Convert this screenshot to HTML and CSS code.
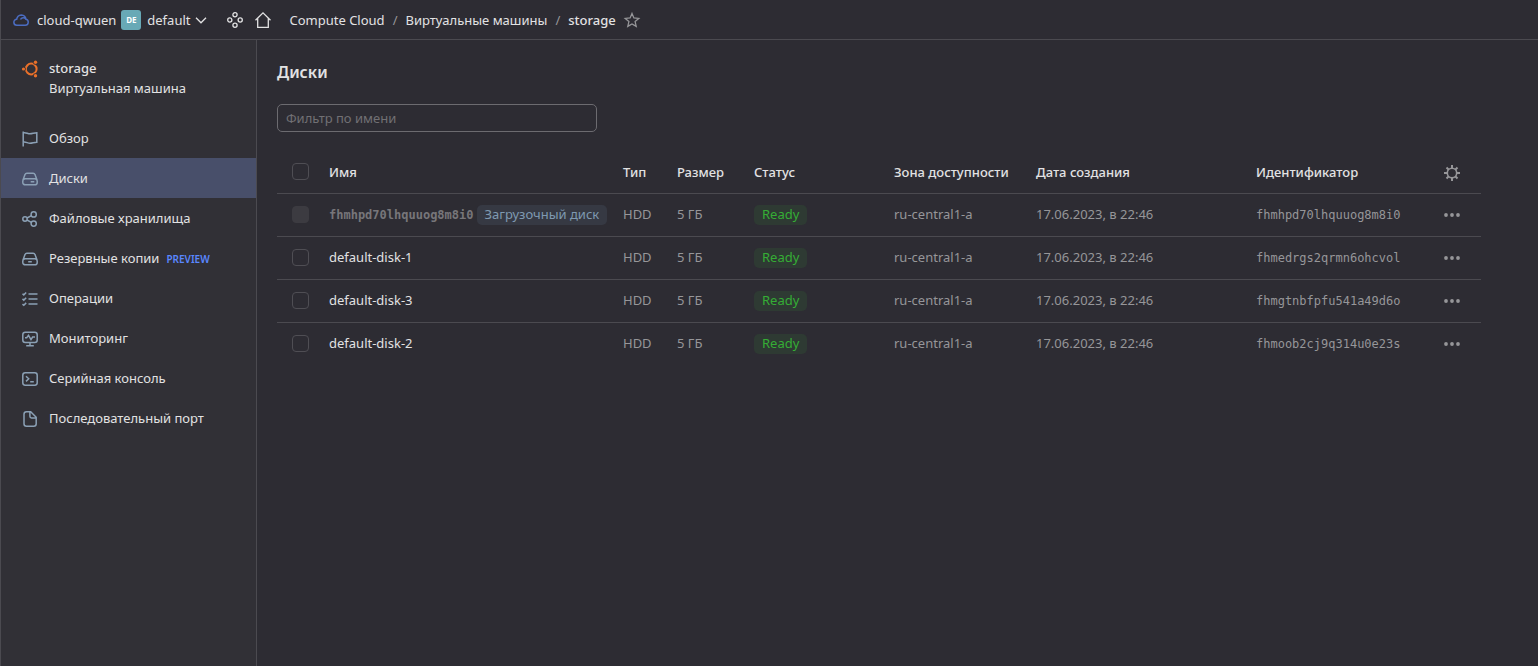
FILE: index.html
```html
<!DOCTYPE html>
<html lang="ru">
<head>
<meta charset="utf-8">
<meta name="viewport" content="width=device-width, initial-scale=1">
<title>storage — Диски</title>
<link rel="stylesheet" href="styles.css">
</head>
<body>
<div class="app">
  <header class="topbar">
    <a class="cloud" href="#">
      <svg class="icon icon-cloud" viewBox="0 0 16 16"><path d="M4 13.2h8.200a3 3 0 0 0 .8-5.900A5 5 0 0 0 8.300 2.900A5 5 0 0 0 3.700 7.200A3 3 0 0 0 4 13.200zM7.500 7.600A3 3 0 0 1 12.800 7"/></svg>
      <span>cloud-qwuen</span>
    </a>
    <button class="folder" type="button">
      <span class="folder-badge">DE</span>
      <span>default</span>
      <svg class="icon icon-chevron" viewBox="0 0 16 16"><path d="M3 5.800 8 10.800l5-5"/></svg>
    </button>
    <button class="tool" type="button" aria-label="Все сервисы">
      <svg class="icon" viewBox="0 0 16 16"><circle cx="8" cy="2.800" r="2.100"/><circle cx="8" cy="13.200" r="2.100"/><circle cx="2.800" cy="8" r="2.100"/><circle cx="13.200" cy="8" r="2.100"/></svg>
    </button>
    <a class="tool tool-home" href="#" aria-label="Главная">
      <svg class="icon" viewBox="0 0 16 16"><path d="M.5 8.300 8 .8l7.500 7.500M2.700 6.500v8.800h10.600V6.500"/></svg>
    </a>
    <nav class="crumbs" aria-label="Навигация">
      <a href="#">Compute Cloud</a>
      <span class="slash">/</span>
      <a href="#">Виртуальные машины</a>
      <span class="slash">/</span>
      <a class="current" href="#">storage</a>
    </nav>
    <button class="tool tool-star" type="button" aria-label="В избранное">
      <svg class="icon" viewBox="0 0 16 16"><path d="m8 1.500 1.900 4.500 4.900.4-3.700 3.200 1.100 4.800L8 11.900l-4.200 2.500 1.100-4.800L1.200 6.400l4.900-.4z"/></svg>
    </button>
  </header>

  <aside class="sidebar">
    <div class="resource">
      <svg class="icon icon-ubuntu" viewBox="0 0 16 16"><circle class="ring" cx="9.200" cy="8" r="5.400"/><circle class="gap" cx="1.600" cy="8" r="2.300"/><circle class="gap" cx="13.300" cy="1.400" r="2.300"/><circle class="gap" cx="13.300" cy="14.600" r="2.300"/><circle class="dot" cx="1.500" cy="8" r="1.600"/><circle class="dot" cx="13.500" cy="1.300" r="1.700"/><circle class="dot" cx="13.500" cy="14.700" r="1.700"/></svg>
      <div>
        <div class="resource-name">storage</div>
        <div>Виртуальная машина</div>
      </div>
    </div>
    <nav class="menu" aria-label="Разделы">
      <a class="menu-item" href="#">
        <svg class="icon" viewBox="0 0 16 16"><path d="M1.200.5v15M1.200 1.800C4 1 5.500 2.800 8 2.800s4-1 6.800-1v9.400C12 11.200 10.500 12.200 8 12.200s-4-1.500-6.800-1"/></svg>
        Обзор
      </a>
      <a class="menu-item active" href="#" aria-current="page">
        <svg class="icon" viewBox="0 0 16 16"><path d="M.8 9.500 3 3.600A2 2 0 0 1 4.900 2.200h6.200A2 2 0 0 1 13 3.600l2.200 5.900M3.200 7.700h9.600a2.400 2.400 0 0 1 2.400 2.400v1.300a2.400 2.400 0 0 1-2.400 2.400H3.200a2.400 2.400 0 0 1-2.400-2.400v-1.300a2.400 2.400 0 0 1 2.400-2.400zM8.700 10.800h3.600"/></svg>
        Диски
      </a>
      <a class="menu-item" href="#">
        <svg class="icon" viewBox="0 0 16 16"><circle cx="3" cy="8" r="2.200"/><circle cx="11.700" cy="3.400" r="2.600"/><circle cx="11.700" cy="12.600" r="2.600"/><path d="m5 7 4.400-2.300M5 9l4.400 2.300"/></svg>
        Файловые хранилища
      </a>
      <a class="menu-item" href="#">
        <svg class="icon" viewBox="0 0 16 16"><path d="M.8 9.500 3 3.600A2 2 0 0 1 4.900 2.200h6.200A2 2 0 0 1 13 3.600l2.200 5.900M3.200 7.700h9.600a2.400 2.400 0 0 1 2.400 2.400v1.300a2.400 2.400 0 0 1-2.400 2.400H3.200a2.400 2.400 0 0 1-2.400-2.400v-1.300a2.400 2.400 0 0 1 2.400-2.400zM6.200 10.800h3.600"/></svg>
        Резервные копии
        <span class="preview">PREVIEW</span>
      </a>
      <a class="menu-item" href="#">
        <svg class="icon" viewBox="0 0 16 16"><path d="M6.500 3h9M6.500 8h9M6.500 13h9M.5 2.700l1.300 1.200L4.200 1.500M.5 7.900l1.300 1.200 2.400-2.400M.5 13.100l1.300 1.200 2.400-2.400"/></svg>
        Операции
      </a>
      <a class="menu-item" href="#">
        <svg class="icon" viewBox="0 0 16 16"><rect x=".8" y="1.200" width="14.400" height="10.200" rx="2.500"/><path d="M8 11.500V14.500M4.200 14.700h7.600M3 6.700h1.700l1.800-2.300 2.500 4.200 1.600-2.500H13"/></svg>
        Мониторинг
      </a>
      <a class="menu-item" href="#">
        <svg class="icon" viewBox="0 0 16 16"><rect x=".8" y="1.800" width="14.400" height="12.400" rx="2.400"/><path d="m4 5.200 2.700 2.600L4 10.400M8.200 10.800h3.600"/></svg>
        Серийная консоль
      </a>
      <a class="menu-item" href="#">
        <svg class="icon" viewBox="0 0 16 16"><path d="M4.500.8h4.200l5.500 5.500v6.400a2.500 2.500 0 0 1-2.500 2.500H4.500A2.500 2.500 0 0 1 2 12.700V3.300A2.500 2.500 0 0 1 4.500.8zM7.900 1v4.300a1.600 1.600 0 0 0 1.600 1.600H14"/></svg>
        Последовательный порт
      </a>
    </nav>
  </aside>

  <main class="content">
    <h1 class="title">Диски</h1>
    <input class="filter" type="text" placeholder="Фильтр по имени" aria-label="Фильтр по имени">
    <table class="disks">
      <colgroup>
        <col class="col-check"><col class="col-name"><col class="col-type"><col class="col-size"><col class="col-status"><col class="col-zone"><col class="col-date"><col class="col-id"><col class="col-actions">
      </colgroup>
      <thead>
        <tr>
          <th class="check"><input type="checkbox" aria-label="Выбрать все"></th>
          <th>Имя</th><th>Тип</th><th>Размер</th><th>Статус</th><th>Зона доступности</th><th>Дата создания</th><th>Идентификатор</th>
          <th class="actions"><button type="button" aria-label="Настройки таблицы"><svg class="icon" viewBox="0 0 16 16"><circle cx="8" cy="8" r="4.700"/><path class="teeth" d="M8 0v3M8 13v3M0 8h3M13 8h3M2.500 2.500l2 2M11.500 11.500l2 2M2.500 13.500l2-2M11.500 4.500l2-2"/></svg></button></th>
        </tr>
      </thead>
      <tbody>
        <tr>
          <td class="check"><input type="checkbox" disabled aria-label="Выбрать fhmhpd70lhquuog8m8i0"></td>
          <td><span class="name-row"><span class="mono unnamed">fhmhpd70lhquuog8m8i0</span><span class="label boot">Загрузочный диск</span></span></td>
          <td>HDD</td><td>5 ГБ</td><td><span class="label ready">Ready</span></td><td>ru-central1-a</td><td>17.06.2023, в 22:46</td><td class="mono">fhmhpd70lhquuog8m8i0</td>
          <td class="actions"><button type="button" aria-label="Действия"><svg class="icon dots" viewBox="0 0 16 16"><circle cx="2" cy="8" r="1.900"/><circle cx="8" cy="8" r="1.900"/><circle cx="14" cy="8" r="1.900"/></svg></button></td>
        </tr>
        <tr>
          <td class="check"><input type="checkbox" aria-label="Выбрать default-disk-1"></td>
          <td><a class="name" href="#">default-disk-1</a></td>
          <td>HDD</td><td>5 ГБ</td><td><span class="label ready">Ready</span></td><td>ru-central1-a</td><td>17.06.2023, в 22:46</td><td class="mono">fhmedrgs2qrmn6ohcvol</td>
          <td class="actions"><button type="button" aria-label="Действия"><svg class="icon dots" viewBox="0 0 16 16"><circle cx="2" cy="8" r="1.900"/><circle cx="8" cy="8" r="1.900"/><circle cx="14" cy="8" r="1.900"/></svg></button></td>
        </tr>
        <tr>
          <td class="check"><input type="checkbox" aria-label="Выбрать default-disk-3"></td>
          <td><a class="name" href="#">default-disk-3</a></td>
          <td>HDD</td><td>5 ГБ</td><td><span class="label ready">Ready</span></td><td>ru-central1-a</td><td>17.06.2023, в 22:46</td><td class="mono">fhmgtnbfpfu541a49d6o</td>
          <td class="actions"><button type="button" aria-label="Действия"><svg class="icon dots" viewBox="0 0 16 16"><circle cx="2" cy="8" r="1.900"/><circle cx="8" cy="8" r="1.900"/><circle cx="14" cy="8" r="1.900"/></svg></button></td>
        </tr>
        <tr>
          <td class="check"><input type="checkbox" aria-label="Выбрать default-disk-2"></td>
          <td><a class="name" href="#">default-disk-2</a></td>
          <td>HDD</td><td>5 ГБ</td><td><span class="label ready">Ready</span></td><td>ru-central1-a</td><td>17.06.2023, в 22:46</td><td class="mono">fhmoob2cj9q314u0e23s</td>
          <td class="actions"><button type="button" aria-label="Действия"><svg class="icon dots" viewBox="0 0 16 16"><circle cx="2" cy="8" r="1.900"/><circle cx="8" cy="8" r="1.900"/><circle cx="14" cy="8" r="1.900"/></svg></button></td>
        </tr>
      </tbody>
    </table>
  </main>
</div>
</body>
</html>
```

FILE: styles.css
```css
:root {
  --bg: #2d2c33;
  --sidebar: #313036;
  --line: #4b4a50;
  --text: #e2e2e3;
  --muted: #969699;
  --misc: #8ba0b5;
}

* { box-sizing: border-box; }

body {
  margin: 0;
  background: var(--bg);
  color: var(--text);
  font: 13px/20px "Noto Sans", sans-serif;
}

a { color: inherit; text-decoration: none; }

button {
  padding: 0;
  border: 0;
  background: none;
  color: inherit;
  font: inherit;
  cursor: pointer;
}

.icon {
  display: block;
  flex: none;
  width: 16px;
  height: 16px;
  fill: none;
  stroke: currentColor;
  stroke-width: 1.5;
  overflow: visible;
}

.app {
  display: grid;
  grid-template: 40px 1fr / 256px minmax(0, 1fr);
  min-height: 100vh;
  border-left: 1px solid var(--line);
}

/* Top bar */
.topbar {
  grid-column: 1 / -1;
  display: flex;
  align-items: center;
  padding: 0 12px;
  border-bottom: 1px solid var(--line);
  white-space: nowrap;
}

.cloud, .folder { display: flex; align-items: center; gap: 8px; }
.icon-cloud { color: #4b6cc0; stroke-width: 1.5; }
.folder { margin-left: 5px; gap: 6px; }

.folder-badge {
  width: 20px;
  border-radius: 3px;
  background: #68a9b6;
  color: #fff;
  font-size: 8px;
  font-weight: 700;
  text-align: center;
}

.icon-chevron { margin-left: -3px; stroke-width: 1.3; }
.tool { margin-left: 18px; }
.tool .icon { stroke-width: 1.3; }
.tool-home { margin-left: 12px; }
.crumbs { display: flex; margin-left: 18px; gap: 8px; }
.slash { color: var(--muted); }
.current { font-weight: 500; }
.tool-star { margin-left: 8px; color: var(--muted); }

/* Sidebar */
.sidebar {
  background: var(--sidebar);
  border-right: 1px solid var(--line);
}

.resource { display: flex; gap: 11px; padding: 18px 21px 20px; }
.resource-name { font-weight: 500; }
.icon-ubuntu { margin-top: 3px; }
.ring { stroke: #e9702a; stroke-width: 2; }
.gap { fill: var(--sidebar); stroke: none; }
.dot { fill: #e9702a; stroke: none; }

.menu-item {
  display: flex;
  align-items: center;
  gap: 11px;
  height: 40px;
  padding: 0 21px;
  white-space: nowrap;
}

.menu-item .icon { margin-top: 1px; color: var(--misc); }
.menu-item.active { background: #484f6a; }
.preview { margin: 2px 0 0 -4px; color: #5a87ff; font-size: 10px; font-weight: 600; }

/* Content */
.content { padding: 20px 57px 20px 20px; }
.title { margin: 0 0 20px; font-size: 16px; line-height: 24px; font-weight: 600; }

.filter {
  display: block;
  width: 320px;
  height: 28px;
  margin-bottom: 18px;
  padding: 0 8px;
  border: 1px solid #6c6b70;
  border-radius: 5px;
  background: transparent;
  color: var(--text);
  font: inherit;
}

.filter::placeholder { color: #717074; opacity: 1; }

.disks {
  width: 100%;
  table-layout: fixed;
  border-collapse: separate;
  border-spacing: 0;
  color: var(--muted);
  white-space: nowrap;
}

.col-check { width: 52px; }
.col-type { width: 54px; }
.col-size { width: 77px; }
.col-status { width: 140px; }
.col-zone { width: 142px; }
.col-date { width: 220px; }
.col-id { width: 188px; }
.col-actions { width: 37px; }

.disks th, .disks td {
  height: 43px;
  padding: 10px 0 0;
  border-bottom: 1px solid var(--line);
  text-align: left;
  vertical-align: top;
}

.disks th { height: 44px; padding-top: 12px; color: var(--text); font-weight: 500; }
.disks tbody tr:last-child td { border-bottom: 0; }
.disks .check { padding: 12px 0 0 15px; }
.disks th.check { padding-top: 13px; }

.check input {
  appearance: none;
  display: block;
  width: 17px;
  height: 17px;
  margin: 0;
  border: 1px solid #4f4e54;
  border-radius: 4px;
}

.check input:disabled { border-color: #3c3b41; background: #3c3b41; }
.name { color: var(--text); }
.name-row { display: flex; align-items: center; gap: 3px; }
.mono { font-family: "DejaVu Sans Mono", monospace; font-size: 12px; }
.disks td.mono { padding-top: 11px; }
.unnamed { color: #77767a; font-weight: 700; }

.label {
  display: block;
  width: fit-content;
  margin-top: 1px;
  padding: 0 8px;
  border-radius: 5px;
  line-height: 19px;
  padding-bottom: 1px;
}

.boot { background: #363943; color: #7f99b1; }
.ready { background: #2e3a33; color: #35ad35; }
.disks .actions { padding-top: 13px; color: var(--muted); }
.disks th.actions { padding-top: 15px; }
.actions button { display: block; width: 16px; }
.actions .icon { stroke-width: 1.6; }
.actions .teeth { stroke-width: 2; }
.actions .dots { fill: currentColor; stroke: none; }
```
